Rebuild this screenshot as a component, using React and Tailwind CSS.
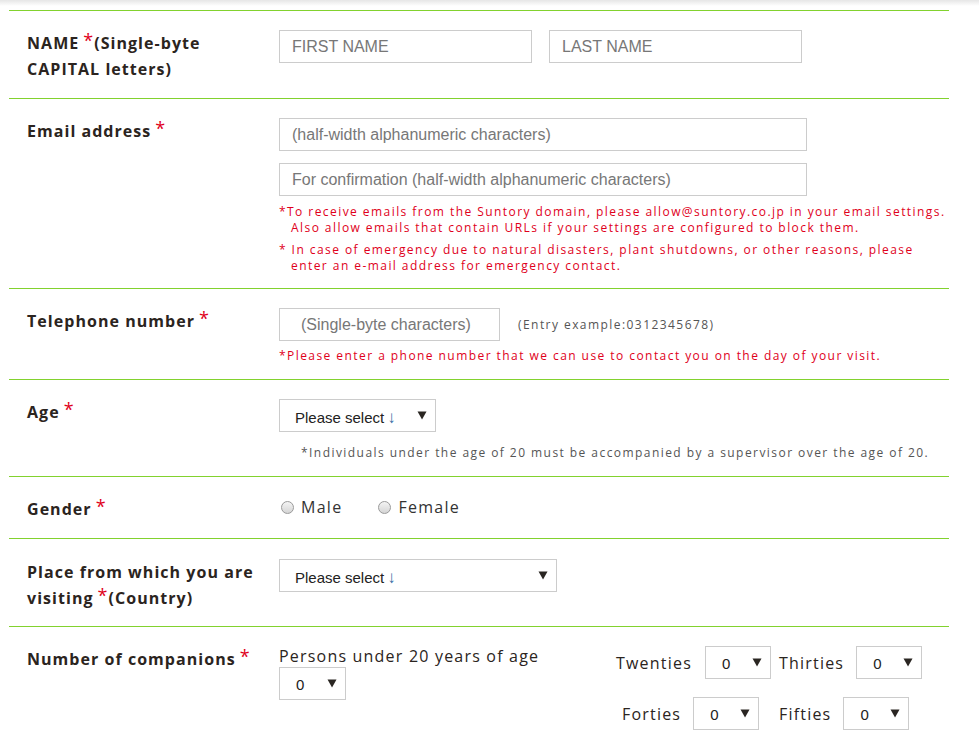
import React from 'react';

const LABEL_FONT = { fontFamily: '"Open Sans", "Noto Sans", sans-serif' };
const INPUT_FONT = { fontFamily: '"Liberation Sans", Arial, sans-serif' };

const Star = () => <span className="text-[#e0001b] text-[18px] font-normal align-top relative -top-[3px] ml-[4px]">*</span>;

const Row = ({ label, children, className = '' }) => (
  <div className={`flex border-t border-[#82d22e] ${className}`}>
    <div className="w-[270px] shrink-0 pl-[18px] text-[16px] leading-[26px] font-bold text-[#2b2420] tracking-[0.065em]" style={LABEL_FONT}>
      {label}
    </div>
    <div className="flex-1 min-w-0">{children}</div>
  </div>
);

const TextBox = ({ placeholder, w, indent = 'pl-3' }) => (
  <div className={`h-[33px] border border-[#cccccc] bg-white flex items-center ${indent} text-[16px] text-[#777]`} style={{ ...INPUT_FONT, width: w }}>
    {placeholder}
  </div>
);

const Caret = () => (
  <svg width="10" height="9" viewBox="0 0 10 9" className="shrink-0">
    <path d="M0.5 0.5 H9.5 L5 8.5 Z" fill="#2a2622" />
  </svg>
);

const SelectBox = ({ text, w, arrow = false, pad = 'pl-[15px]' }) => (
  <div className={`h-[33px] border border-[#cccccc] bg-white flex items-center justify-between ${pad} pr-[8px] text-[15px] text-[#222]`} style={{ ...INPUT_FONT, width: w }}>
    <span className="pt-[4px]">
      {text}
      {arrow && <span className="text-[#3a6ea5] text-[17px] ml-[3px]">↓</span>}
    </span>
    <Caret />
  </div>
);

const Note = ({ children, className = '' }) => (
  <p className={`text-[12px] leading-[16px] tracking-[0.12em] ${className}`} style={LABEL_FONT}>{children}</p>
);

const Radio = ({ label }) => (
  <label className="flex items-center gap-[7px] text-[16px] text-[#333] tracking-[0.08em]" style={LABEL_FONT}>
    <span className="w-[13px] h-[13px] rounded-full border border-[#9a9a9a] bg-gradient-to-b from-[#f4f4f4] to-[#d5d5d5]" />
    {label}
  </label>
);

const AgeGroup = ({ label, gap = 'gap-[12px]' }) => (
  <div className={`flex items-center ${gap}`}>
    <span className="text-[16px] text-[#2b2420] tracking-[0.075em]" style={LABEL_FONT}>{label}</span>
    <SelectBox text="0" w={66} pad="pl-[16px]" />
  </div>
);

export default function App() {
  return (
    <div className="min-h-screen bg-white">
      <div className="h-[6px] bg-gradient-to-b from-[#e6e6e6] to-white" />
      <div className="ml-[9px] w-[940px] mt-[4px]">
        <Row label={<>NAME<Star />(Single-byte<br />CAPITAL letters)</>} className="pt-[19px] pb-[16px]">
          <div className="flex gap-[17px]">
            <TextBox placeholder="FIRST NAME" w={253} />
            <TextBox placeholder="LAST NAME" w={253} />
          </div>
        </Row>

        <Row label={<>Email address<Star /></>} className="pt-[19px] pb-[14px]">
          <TextBox placeholder="(half-width alphanumeric characters)" w={528} />
          <div className="h-[12px]" />
          <TextBox placeholder="For confirmation (half-width alphanumeric characters)" w={528} />
          <div className="text-[#e0001b] mt-[8px]">
            <Note>*To receive emails from the Suntory domain, please allow@suntory.co.jp in your email settings.</Note>
            <Note className="pl-[12px]">Also allow emails that contain URLs if your settings are configured to block them.</Note>
            <Note className="mt-[6px]">* In case of emergency due to natural disasters, plant shutdowns, or other reasons, please</Note>
            <Note className="pl-[12px]">enter an e-mail address for emergency contact.</Note>
          </div>
        </Row>

        <Row label={<>Telephone number<Star /></>} className="pt-[19px] pb-[15px]">
          <div className="flex items-center gap-[18px]">
            <TextBox placeholder="(Single-byte characters)" w={221} indent="pl-[21px]" />
            <Note className="text-[#555]">(Entry example:0312345678)</Note>
          </div>
          <Note className="text-[#e0001b] mt-[7px]">*Please enter a phone number that we can use to contact you on the day of your visit.</Note>
        </Row>

        <Row label={<>Age<Star /></>} className="pt-[19px] pb-[15px]">
          <SelectBox text="Please select" arrow w={157} />
          <Note className="text-[#555] pl-[22px] mt-[13px]">*Individuals under the age of 20 must be accompanied by a supervisor over the age of 20.</Note>
        </Row>

        <Row label={<>Gender<Star /></>} className="pt-[19px] pb-[16px]">
          <div className="flex items-center gap-[36px] h-[24px] pl-[2px] mt-[-1px]">
            <Radio label="Male" />
            <Radio label="Female" />
          </div>
        </Row>

        <Row label={<>Place from which you are<br />visiting<Star />(Country)</>} className="pt-[20px] pb-[15px]">
          <SelectBox text="Please select" arrow w={278} />
        </Row>

        <Row label={<>Number of companions<Star /></>} className="pt-[19px] pb-[20px]">
          <div className="flex">
            <div className="w-[330px] shrink-0">
              <div className="text-[16px] leading-[22px] text-[#2b2420] tracking-[0.075em] -mt-[1px]" style={LABEL_FONT}>Persons under 20 years of age</div>
              <SelectBox text="0" w={67} pad="pl-[16px]" />
            </div>
            <div className="grid grid-cols-[170px_auto] gap-y-[18px]">
              <div className="pl-[7px]"><AgeGroup label="Twenties" gap="gap-[13px]" /></div>
              <div><AgeGroup label="Thirties" /></div>
              <div className="pl-[13px]"><AgeGroup label="Forties" /></div>
              <div><AgeGroup label="Fifties" /></div>
            </div>
          </div>
        </Row>
      </div>
    </div>
  );
}
